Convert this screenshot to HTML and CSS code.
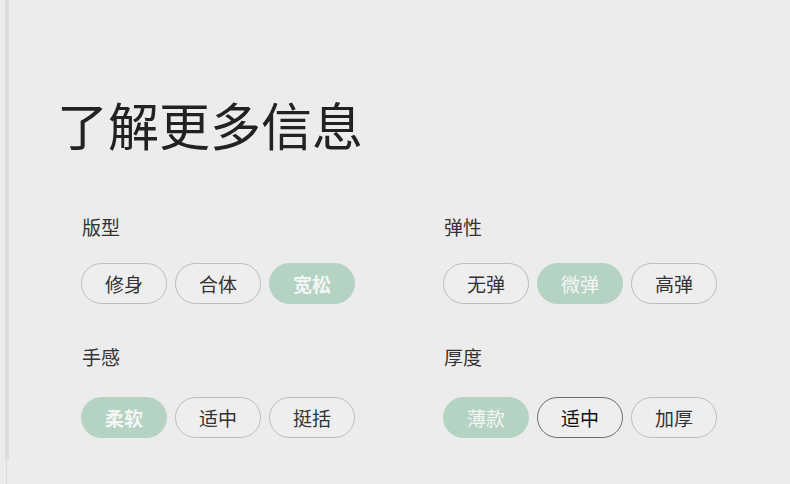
FILE: index.html
```html
<!DOCTYPE html>
<html lang="zh-CN">
<head>
<meta charset="utf-8">
<title>了解更多信息</title>
<link rel="stylesheet" href="styles.css">
</head>
<body>
<div class="shell">
  <h1 class="title">了解更多信息</h1>
  <div class="specs">
    <section class="spec">
      <h2 class="spec-name">版型</h2>
      <div class="options">
        <span class="pill">修身</span>
        <span class="pill">合体</span>
        <span class="pill pill-on pill-bold">宽松</span>
      </div>
    </section>
    <section class="spec">
      <h2 class="spec-name">弹性</h2>
      <div class="options">
        <span class="pill">无弹</span>
        <span class="pill pill-on">微弹</span>
        <span class="pill">高弹</span>
      </div>
    </section>
    <section class="spec spec-low">
      <h2 class="spec-name">手感</h2>
      <div class="options">
        <span class="pill pill-on pill-bold">柔软</span>
        <span class="pill">适中</span>
        <span class="pill">挺括</span>
      </div>
    </section>
    <section class="spec spec-low">
      <h2 class="spec-name">厚度</h2>
      <div class="options">
        <span class="pill pill-on">薄款</span>
        <span class="pill pill-hover">适中</span>
        <span class="pill">加厚</span>
      </div>
    </section>
  </div>
</div>
<div class="shell-foot"></div>
</body>
</html>
```

FILE: styles.css
```css
html, body {
  margin: 0;
  padding: 0;
  background: #ececec;
}

body {
  width: 790px;
  height: 484px;
  overflow: hidden;
  font-family: "Noto Sans CJK SC", "Noto Sans", sans-serif;
  color: #2a2a2a;
}

.shell {
  margin-left: 5px;
  border-left: 4px solid #dcdcdc;
  height: 460px;
  box-sizing: border-box;
  padding: 90px 0 0 48px;
}

.shell-foot {
  margin-left: 6px;
  border-left: 1px solid #dddddd;
  height: 24px;
}

.title {
  margin: 0;
  font-size: 51px;
  line-height: 68px;
  font-weight: 400;
  color: #222222;
  letter-spacing: 0;
}

.specs {
  display: grid;
  grid-template-columns: 362px 362px;
  row-gap: 39px;
  margin-top: 55px;
  padding-left: 24px;
}

.spec-name {
  margin: 0 0 0 1px;
  font-size: 19px;
  line-height: 28px;
  font-weight: 400;
  color: #333333;
}

.options {
  display: flex;
  gap: 8px;
  margin-top: 22px;
}

.spec-low .options {
  margin-top: 26px;
}

.pill {
  box-sizing: border-box;
  width: 86px;
  height: 41px;
  border: 1px solid #bdbdbd;
  border-radius: 21px;
  display: flex;
  align-items: center;
  justify-content: center;
  font-size: 19px;
  color: #333333;
  background: #eeeeee;
}

.pill-on {
  background: #b4d3c3;
  border-color: #b4d3c3;
  color: #f4f6f5;
}

.pill-bold {
  font-weight: 700;
}

.pill-hover {
  border-color: #6a6a6a;
  color: #111111;
}
```
